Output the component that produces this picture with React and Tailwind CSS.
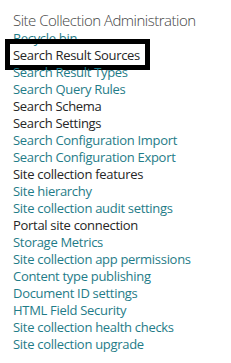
import React from 'react';

const items = [
  { label: 'Recycle bin', link: true },
  { label: 'Search Result Sources', link: false, boxed: true },
  { label: 'Search Result Types', link: true },
  { label: 'Search Query Rules', link: true },
  { label: 'Search Schema', link: false },
  { label: 'Search Settings', link: false },
  { label: 'Search Configuration Import', link: true },
  { label: 'Search Configuration Export', link: true },
  { label: 'Site collection features', link: false },
  { label: 'Site hierarchy', link: true },
  { label: 'Site collection audit settings', link: true },
  { label: 'Portal site connection', link: false },
  { label: 'Storage Metrics', link: true },
  { label: 'Site collection app permissions', link: true },
  { label: 'Content type publishing', link: true },
  { label: 'Document ID settings', link: true },
  { label: 'HTML Field Security', link: true },
  { label: 'Site collection health checks', link: true },
  { label: 'Site collection upgrade', link: true },
];

export default function App() {
  return (
    <div
      className="w-[231px] h-[363px] bg-white pl-[13px] pt-[10px]"
      style={{ fontFamily: '"Open Sans", "Noto Sans", sans-serif' }}
    >
      <h2 className="text-[15px] leading-[20px] font-light text-[#444] tracking-[-0.5px]">
        Site Collection Administration
      </h2>
      <ul className="flex flex-col text-[13px] leading-[17px] tracking-[-0.3px]">
        {items.map((it) => (
          <li key={it.label} className="relative whitespace-nowrap">
            <span className={it.link ? 'text-[#1f7c88]' : 'text-[#262626]'}>{it.label}</span>
            {it.boxed && (
              <span className="absolute left-[-8px] top-[-8px] w-[145px] h-[31px] border-[5px] border-black" />
            )}
          </li>
        ))}
      </ul>
    </div>
  );
}
